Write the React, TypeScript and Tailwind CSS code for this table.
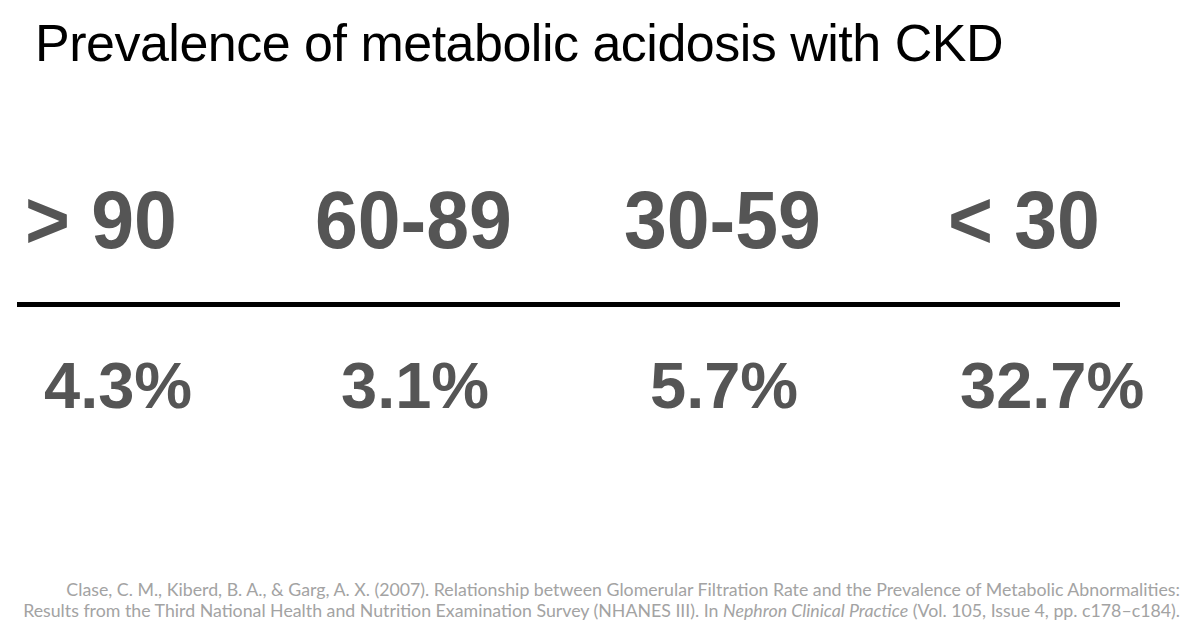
const ranges = [
  { label: "> 90", value: "4.3%" },
  { label: "60-89", value: "3.1%" },
  { label: "30-59", value: "5.7%" },
  { label: "< 30", value: "32.7%" },
];

export default function App() {
  return (
    <div className="w-[1200px] h-[644px] bg-white overflow-hidden flex flex-col">
      {/* Title */}
      <h1 className="pt-[17px] pl-[35px] text-[52px] leading-none tracking-[-0.5px] text-black whitespace-nowrap font-['Liberation_Sans',Arial,sans-serif]">
        Prevalence of metabolic acidosis with CKD
      </h1>

      {/* eGFR ranges */}
      <div className="mt-[111px] pl-[25px] grid grid-cols-[290px_309px_324px_1fr] text-[81px] leading-none font-bold text-[#555555] font-['Liberation_Sans',Arial,sans-serif]">
        {ranges.map((r) => (
          <div key={r.label} className="whitespace-nowrap">
            <span className="inline-block origin-left scale-x-[0.95]">{r.label}</span>
          </div>
        ))}
      </div>

      <div className="mt-[41px] ml-[17px] w-[1103px] h-[5px] bg-black" />

      {/* Prevalence */}
      <div className="mt-[46px] pl-[44px] grid grid-cols-[297px_309px_310px_1fr] text-[65px] leading-none font-bold text-[#555555] font-['Liberation_Sans',Arial,sans-serif]">
        {ranges.map((r) => (
          <div key={r.value} className="whitespace-nowrap">
            {r.value}
          </div>
        ))}
      </div>

      {/* Reference */}
      <p className="mt-[161px] pr-[20px] text-right text-[17.75px] leading-[21px] text-[#a3a3a3] whitespace-nowrap font-['Lato','Open_Sans',sans-serif]">
        Clase, C. M., Kiberd, B. A., &amp; Garg, A. X. (2007). Relationship between Glomerular Filtration Rate and the Prevalence of Metabolic Abnormalities:
        <br />
        Results from the Third National Health and Nutrition Examination Survey (NHANES III). In <i>Nephron Clinical Practice</i> (Vol. 105, Issue 4, pp. c178–c184).
      </p>
    </div>
  );
}
